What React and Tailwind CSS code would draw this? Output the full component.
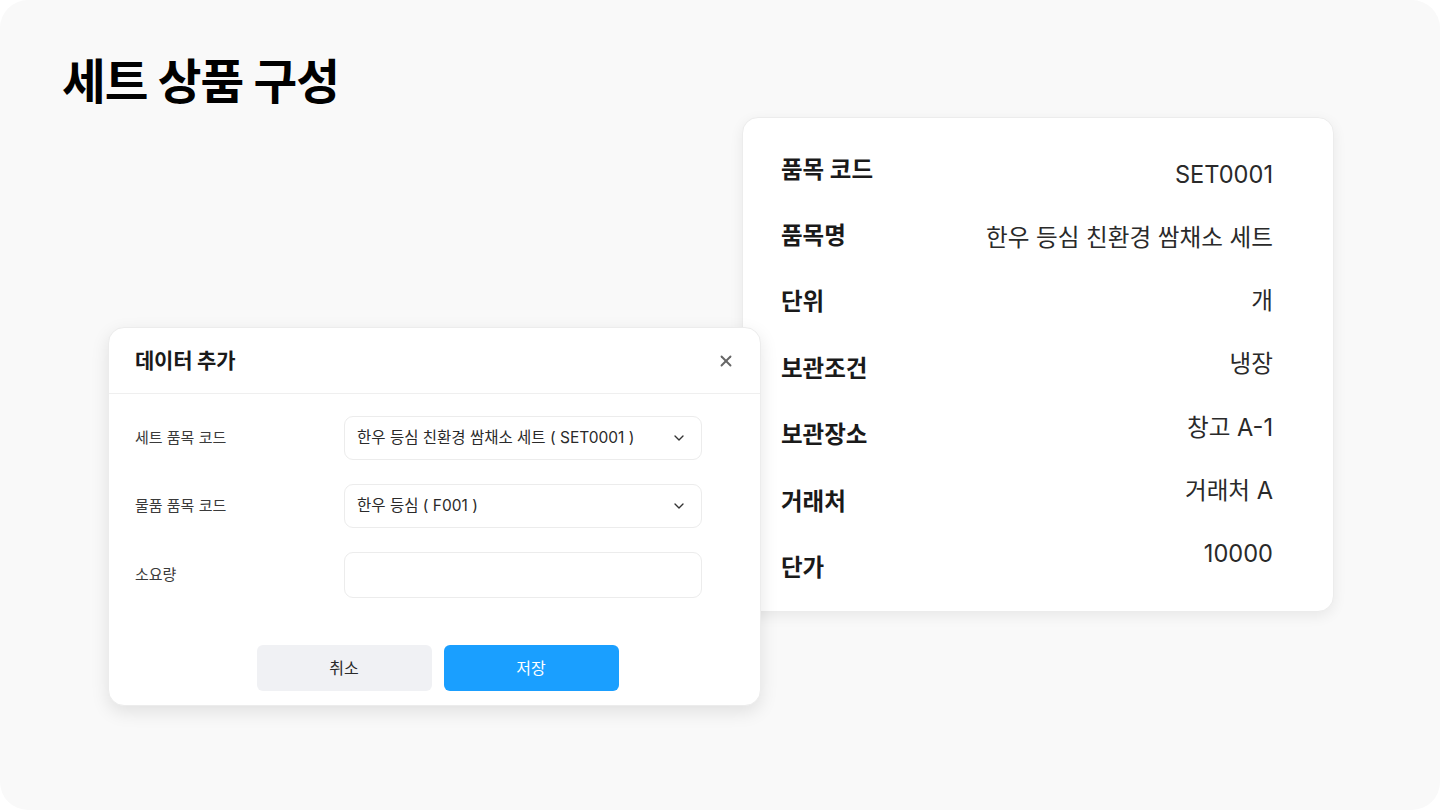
import { ChevronDown, X } from "lucide-react";

const FONT = { fontFamily: "Inter, 'Noto Sans CJK KR', sans-serif" };

const details = [
  ["품목 코드", "SET0001"],
  ["품목명", "한우 등심 친환경 쌈채소 세트"],
  ["단위", "개"],
  ["보관조건", "냉장"],
  ["보관장소", "창고 A-1"],
  ["거래처", "거래처 A"],
  ["단가", "10000"],
];

function DetailCard() {
  return (
    <div className="ml-[742px] w-[592px] h-[495px] bg-white rounded-[16px] border border-[#ececec] shadow-[0_4px_14px_rgba(0,0,0,0.07)] flex justify-between pl-[38px] pr-[60px]">
      {/* Labels */}
      <div className="flex flex-col pt-[18px]">
        {details.map(([label]) => (
          <div
            key={label}
            className="h-[66.4px] flex items-center text-[23.5px] font-bold text-[#1a1a1a]"
          >
            {label}
          </div>
        ))}
      </div>

      {/* Values */}
      <div className="flex flex-col items-end pt-[25px]">
        {details.map(([label, value]) => (
          <div
            key={label}
            className="h-[63.2px] flex items-center text-[23.6px] text-[#2a2a2a]"
          >
            {value}
          </div>
        ))}
      </div>
    </div>
  );
}

function Field({ label, children }) {
  return (
    <div className="flex items-center">
      <span className="w-[209px] text-[15px] text-[#3a3a3a]">{label}</span>
      {children}
    </div>
  );
}

function SelectBox({ value }) {
  return (
    <div className="w-[358px] h-[44px] rounded-[9px] border border-[#ececec] flex items-center justify-between pl-[12px] pr-[14px] text-[15.5px] text-[#2a2a2a]">
      <span>{value}</span>
      <ChevronDown size={16} strokeWidth={2} className="text-[#333]" />
    </div>
  );
}

function AddDataModal() {
  return (
    <div className="absolute left-[108px] top-[327px] w-[653px] h-[379px] bg-white rounded-[16px] border border-[#ececec] shadow-[0_6px_18px_rgba(0,0,0,0.10)] flex flex-col">
      <div className="h-[66px] flex items-center justify-between pl-[26px] pr-[25px] border-b border-[#efefef]">
        <span className="text-[21px] font-bold text-[#1a1a1a] tracking-[-0.01em]">
          데이터 추가
        </span>
        <X size={18} strokeWidth={2.5} className="text-[#666]" />
      </div>

      <div className="flex flex-col gap-[24px] pl-[26px] pt-[22px]">
        <Field label="세트 품목 코드">
          <SelectBox value="한우 등심 친환경 쌈채소 세트 ( SET0001 )" />
        </Field>
        <Field label="물품 품목 코드">
          <SelectBox value="한우 등심 ( F001 )" />
        </Field>
        <Field label="소요량">
          <div className="w-[358px] h-[46px] rounded-[9px] border border-[#ececec]" />
        </Field>
      </div>

      <div className="flex justify-center gap-[12px] mt-[47px] pl-[6px]">
        <button className="w-[175px] h-[46px] rounded-[6px] bg-[#f0f1f4] text-[16px] text-[#2a2a2a]">
          취소
        </button>
        <button className="w-[175px] h-[46px] rounded-[6px] bg-[#1a9fff] text-[16px] text-white">
          저장
        </button>
      </div>
    </div>
  );
}

export default function App() {
  return (
    <div className="w-[1440px] h-[810px] bg-white" style={FONT}>
      <div className="relative w-full h-full bg-[#f9f9f9] rounded-[28px] overflow-hidden">
        <h1 className="pl-[62px] pt-[54px] h-[117px] text-[47.5px] leading-[56px] font-bold text-black tracking-[-0.02em]">
          세트 상품 구성
        </h1>
        <DetailCard />
        <AddDataModal />
      </div>
    </div>
  );
}
